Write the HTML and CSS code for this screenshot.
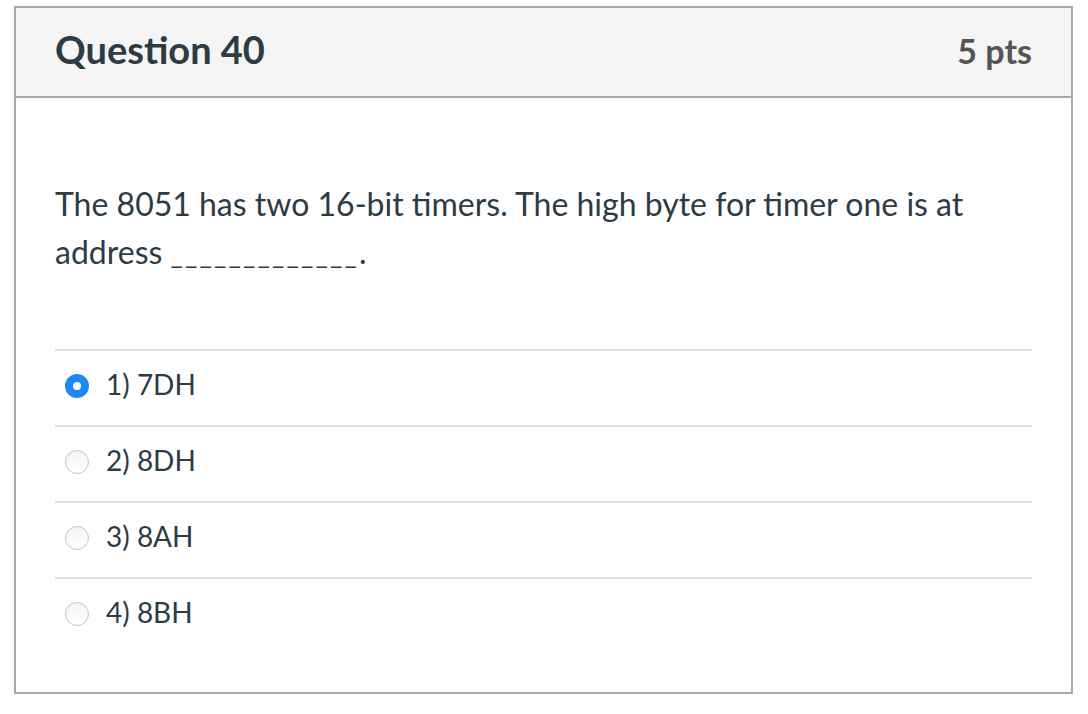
FILE: index.html
```html
<!DOCTYPE html>
<html>
<head>
<meta charset="utf-8">
<link rel="stylesheet" href="styles.css">
</head>
<body>
<div class="card">
  <div class="card-header">
    <h2 class="title">Question 40</h2>
    <span class="pts">5 pts</span>
  </div>
  <div class="card-body">
    <p class="question">The 8051 has two 16-bit timers. The high byte for timer one is at <span class="tail">address <span class="blank">_____________</span>.</span></p>
    <div class="answers">
      <label class="answer"><span class="radio checked"></span><span class="answer-text">1) 7DH</span></label>
      <label class="answer"><span class="radio"></span><span class="answer-text">2) 8DH</span></label>
      <label class="answer"><span class="radio"></span><span class="answer-text">3) 8AH</span></label>
      <label class="answer"><span class="radio"></span><span class="answer-text">4) 8BH</span></label>
    </div>
  </div>
</div>
</body>
</html>
```
FILE: styles.css
```css
html, body {
  margin: 0;
  padding: 0;
  background: #ffffff;
}
body {
  font-family: Lato, "Open Sans", sans-serif;
  color: #2d3b45;
}
.card {
  margin: 6px 0 0 14px;
  width: 1059px;
  height: 688px;
  box-sizing: border-box;
  border: 2px solid #aaaaaa;
  display: flex;
  flex-direction: column;
}
.card-header {
  height: 90px;
  box-sizing: border-box;
  background: #f5f5f5;
  border-bottom: 2px solid #aaaaaa;
  display: flex;
  align-items: baseline;
  justify-content: space-between;
  padding: 18px 39px 0 39px;
}
.title {
  margin: 0;
  font-size: 38px;
  font-weight: 700;
  line-height: normal;
  color: #2d3b45;
}
.pts {
  font-size: 34px;
  font-weight: 700;
  color: #555555;
}
.card-body {
  padding: 82px 39px 0 39px;
}
.question {
  margin: 0;
  font-size: 32px;
  line-height: 48px;
}
.tail {
  white-space: nowrap;
}
.blank {
  font-size: 27px;
  line-height: 1;
  letter-spacing: 2.1px;
}
.answers {
  margin-top: 73px;
}
.answer {
  display: flex;
  align-items: center;
  height: 76px;
  box-sizing: border-box;
  border-top: 2px solid #dddddd;
  padding: 0 0 8px 10px;
}
.radio {
  width: 24px;
  height: 24px;
  border-radius: 50%;
  border: 1px solid #c4c4c4;
  background: linear-gradient(#f4f4f4, #ffffff);
  box-sizing: border-box;
  margin: 4px 17px 0 0;
  flex: none;
}
.radio.checked {
  border: 8px solid #1e88f5;
  background: #ffffff;
}
.answer-text {
  font-size: 28px;
  color: #2d3b45;
}
```
